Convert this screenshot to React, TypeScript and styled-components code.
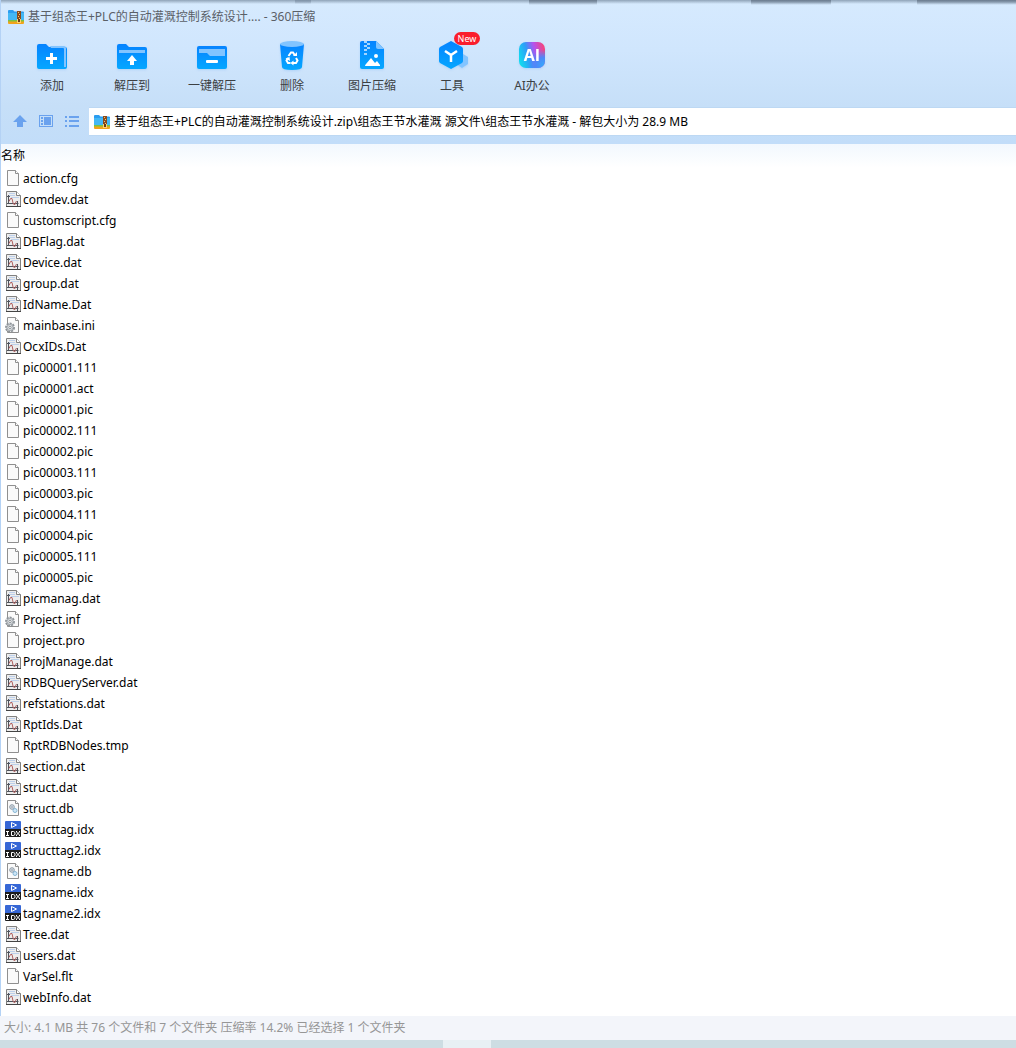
import React from "react";
import styled, { createGlobalStyle } from "styled-components";

const GlobalStyle = createGlobalStyle`
  * { box-sizing: border-box; }
  body {
    margin: 0;
    background: #ffffff;
    font-family: "Noto Sans", "Noto Sans CJK SC", sans-serif;
    font-size: 12px;
    color: #000000;
  }
`;

const Window = styled.div`
  display: flex;
  flex-direction: column;
  min-height: 100vh;
`;

const Frame = styled.main`
  flex: 1;
  display: flex;
  flex-direction: column;
  border-left: 1px solid #b4d2f5;
`;

const Chrome = styled.header`
  background:
    linear-gradient(#8093a8, #8093a800) 294px 0 / 16px 4px no-repeat,
    linear-gradient(#6c7d90, #6c7d9000) 528px 0 / 68px 5px no-repeat,
    linear-gradient(#6c7d90, #6c7d9000) 750px 0 / 80px 5px no-repeat,
    linear-gradient(#6c7d90, #6c7d9000) 916px 0 / 100% 5px no-repeat,
    linear-gradient(#8fa3b8, #b9cde000) 0 0 / 100% 4px no-repeat,
    linear-gradient(#d6eafe, #d0e6fd 50px, #c6dff8 106px, #c2ddf9);
`;

const TitleBar = styled.div`
  display: flex;
  align-items: center;
  gap: 4px;
  height: 32px;
  padding: 2px 0 0 7px;
`;

const Title = styled.h1`
  margin: 0;
  font-size: 12px;
  font-weight: 400;
  line-height: 18px;
  color: #5a6067;
`;

const Toolbar = styled.nav`
  display: flex;
  height: 75px;
  padding: 8px 0 0 11px;
`;

const Tool = styled.button`
  position: relative;
  display: flex;
  flex-direction: column;
  align-items: center;
  gap: 6px;
  width: 80px;
  padding: 0;
  border: 0;
  background: none;
  font: inherit;
  line-height: 16px;
  color: #3c4043;
  white-space: nowrap;

  svg { filter: drop-shadow(0 1px 1px #5aa5f040); }
`;

const Badge = styled.span`
  position: absolute;
  top: -8px;
  left: 42px;
  width: 26px;
  border-radius: 7px;
  background: #fa1e2d;
  color: #ffffff;
  font-size: 9px;
  line-height: 13px;
  text-align: center;
`;

const PathBar = styled.div`
  display: flex;
  align-items: center;
  height: 37px;
  padding-bottom: 8px;
`;

const NavButtons = styled.div`
  display: flex;
  gap: 10px;
  padding: 0 9px 2px 11px;
`;

const NavButton = styled.button`
  display: flex;
  padding: 0;
  border: 0;
  background: none;
`;

const PathBox = styled.label`
  flex: 1;
  display: flex;
  align-items: center;
  gap: 4px;
  height: 29px;
  padding-left: 5px;
  background: #ffffff;
  border-top: 1px solid #bdd8f3;
  border-bottom: 1px solid #bdd8f3;
`;

const PathInput = styled.input`
  flex: 1;
  padding: 0;
  border: 0;
  outline: 0;
  background: none;
  font: inherit;
  line-height: 18px;
  color: #000000;
`;

const Files = styled.section`
  flex: 1;
  padding-bottom: 8px;
  background: linear-gradient(#f2f8fe, #ffffff 24px);
`;

const FileTable = styled.table`
  width: 100%;
  border-collapse: collapse;
`;

const NameHeader = styled.th`
  height: 24px;
  padding: 0;
  font-weight: 400;
  line-height: 16px;
  text-align: left;
`;

const FileCell = styled.td`
  height: 21px;
  padding: 0 0 0 4px;
`;

const FileName = styled.div`
  display: flex;
  align-items: flex-start;
  gap: 2px;
  line-height: 21px;

  svg {
    flex: none;
    margin-top: 2px;
  }
`;

const StatusBar = styled.footer`
  height: 24px;
  padding-left: 4px;
  background: #f3f5fa;
  color: #969696;
  line-height: 24px;
`;

const Taskbar = styled.div`
  height: 8px;
  background: linear-gradient(#e8f0f4, #e8f0f4) 443px 0 / 48px 100% no-repeat #cddde3;
`;

const ArchiveIcon = () => (
  <svg width="16" height="16" viewBox="0 0 16 16" aria-hidden="true">
    <path d="M0 2q0-1 1-1h4l1.500 1.500H15q1 0 1 1V11H0z" fill="#2b9df0" />
    <path d="M0 4h16v7H0z" fill="#43b8f5" />
    <path d="M0 11h16v2H0z" fill="#7cc242" />
    <path d="M0 12.500h16V14q0 1-1 1H1q-1 0-1-1z" fill="#f2a31b" />
    <path d="M9 2h4v12H9z" fill="#8a4a1c" />
    <path d="M10 3h1v1h-1zM11 5h1v1h-1zM10 7h1v1h-1zM11 9h1v1h-1z" fill="#f5c66a" />
    <path d="M9 10h4v4H9z" fill="#ffd36b" />
    <path d="M10 10h2v3h-2z" fill="#6c3b18" />
  </svg>
);

const Gradients = () => (
  <svg width="0" height="0" style={{ position: "absolute" }} aria-hidden="true">
    <defs>
      <linearGradient id="blue" x1="0" y1="0" x2="0" y2="1">
        <stop offset="0" stopColor="#0683ff" />
        <stop offset="1" stopColor="#05a7ff" />
      </linearGradient>
      <linearGradient id="ai" x1="0" y1="0.600" x2="1" y2="0.300">
        <stop offset="0" stopColor="#12d9ee" />
        <stop offset="0.350" stopColor="#2f9cf8" />
        <stop offset="0.650" stopColor="#b453ee" />
        <stop offset="1" stopColor="#f5457c" />
      </linearGradient>
      <radialGradient id="aiCorner" cx="0.950" cy="0.900" r="0.600">
        <stop offset="0" stopColor="#35a8fb" />
        <stop offset="0.500" stopColor="#4d88f8" />
        <stop offset="1" stopColor="#4d88f8" stopOpacity="0" />
      </radialGradient>
    </defs>
  </svg>
);

const AddIcon = () => (
  <svg width="32" height="32" viewBox="0 0 32 32" aria-hidden="true">
    <path d="M1 6q0-2 2-2h7l3 3h16q2 0 2 2v18q0 2-2 2H3q-2 0-2-2z" fill="url(#blue)" />
    <path d="M14 6h14q2 0 2 2v19h-2V9q0-1-1-1H15z" fill="#82c4ff" />
    <path d="M14 13h3v4h4v3h-4v4h-3v-4h-4v-3h4z" fill="#fff" />
  </svg>
);

const ExtractIcon = () => (
  <svg width="32" height="32" viewBox="0 0 32 32" aria-hidden="true">
    <path d="M1 6q0-2 2-2h7l3 3h16q2 0 2 2v18q0 2-2 2H3q-2 0-2-2z" fill="url(#blue)" />
    <path d="M3 10h26v3H3z" fill="#82c4ff" />
    <path d="M16 15l5 6h-3v4h-4v-4h-3z" fill="#fff" />
  </svg>
);

const QuickIcon = () => (
  <svg width="32" height="32" viewBox="0 0 32 32" aria-hidden="true">
    <rect x="1" y="6" width="30" height="23" rx="2" fill="url(#blue)" />
    <path d="M3 9h26v7H14l-3-3H3z" fill="#82c4ff" />
    <rect x="10" y="20" width="12" height="3" rx="1" fill="#fff" />
  </svg>
);

const DeleteIcon = () => (
  <svg width="32" height="32" viewBox="0 0 32 32" aria-hidden="true">
    <path d="M4 4h24l-2 23q0 3-10 3T6 27z" fill="url(#blue)" />
    <ellipse cx="16" cy="4" rx="12" ry="3" fill="#82c4ff" />
    <g fill="none" stroke="#fff" strokeWidth="2">
      <path d="M12.500 16l2.500-3.500h2l2 3" />
      <path d="M20 18l1.500 2.500-1.500 2.500h-3" />
      <path d="M14.500 23H12l-1.500-2.500 1.500-2.500" />
    </g>
    <path d="M17 16h4v-4zM17.500 20.500v5l-3-2.500zM9.500 18.500l4-1.500.5 4z" fill="#fff" />
  </svg>
);

const ImageZipIcon = () => (
  <svg width="32" height="32" viewBox="0 0 32 32" aria-hidden="true">
    <path d="M4 3q0-2 2-2h14l8 8v18q0 2-2 2H6q-2 0-2-2z" fill="url(#blue)" />
    <path d="M20 1l8 8h-6q-2 0-2-2z" fill="#82c4ff" />
    <path d="M8 1h3v2H8zM11 3h3v2h-3zM8 5h3v2H8zM11 7h3v2h-3zM8 9h3v2H8zM8 13h3v2H8z" fill="#a5d5ff" />
    <path d="M9 26q0-1 1-2l5-6 4 5 2-2 3 4v1z" fill="#fff" />
    <circle cx="20" cy="16" r="2" fill="#fff" />
  </svg>
);

const ToolsIcon = () => (
  <svg width="32" height="32" viewBox="0 0 32 32" aria-hidden="true">
    <path d="M27 14l5 3v7l-6 4-6-4z" fill="#82c4ff" />
    <path d="M15 1l11 6q1 1 1 2v12q0 1-1 2l-11 6L4 23q-1-1-1-2V9q0-1 1-2z" fill="url(#blue)" />
    <path d="M9 11l6 4 6-4M15 15v7" fill="none" stroke="#fff" strokeWidth="2.500" />
  </svg>
);

const AiIcon = () => (
  <svg width="32" height="32" viewBox="0 0 32 32" aria-hidden="true">
    <rect x="3" y="2" width="26" height="26" rx="7" fill="url(#ai)" />
    <rect x="3" y="2" width="26" height="26" rx="7" fill="url(#aiCorner)" />
    <text x="16" y="21" textAnchor="middle" fontFamily="Open Sans" fontWeight="700" fontSize="16" fill="#fff">AI</text>
  </svg>
);

const UpIcon = () => (
  <svg width="16" height="16" viewBox="0 0 16 16" aria-hidden="true">
    <path d="M8 2l7 7h-4v5H5V9H1z" fill="#6aa2ee" />
  </svg>
);

const PanelIcon = () => (
  <svg width="16" height="16" viewBox="0 0 16 16" aria-hidden="true" fill="#6aa2ee">
    <path d="M1 2h14v12H1zM2 3v10h12V3z" fillRule="evenodd" />
    <path d="M3 4h2v2H3zM3 7h2v2H3zM3 10h2v2H3zM6 4h7v8H6z" />
  </svg>
);

const ListIcon = () => (
  <svg width="16" height="16" viewBox="0 0 16 16" aria-hidden="true" fill="#6aa2ee">
    <path d="M1 3h2v2H1zM5 3h10v2H5zM1 7h2v2H1zM5 7h10v2H5zM1 12h2v2H1zM5 12h10v2H5z" />
  </svg>
);

const PageIcon = () => (
  <svg width="16" height="16" viewBox="0 0 16 16" aria-hidden="true">
    <path d="M2.500.5h8l3 3v12h-11z" fill="#fafafa" stroke="#8f8f8f" />
    <path d="M10.500.5v3h3" fill="#fff" stroke="#8f8f8f" />
  </svg>
);

const DataIcon = () => (
  <svg width="16" height="16" viewBox="0 0 16 16" aria-hidden="true">
    <path d="M1.500.5h10l4 4v11h-14z" fill="#ededed" stroke="#808080" />
    <path d="M11.500.5v4h4" fill="#fff" stroke="#808080" />
    <path d="M4 2.500h6M4 4.500h6M6 6.500h8" stroke="#bccfea" />
    <path d="M3.500 4v9M2 12.500h11.500M2 5.500h3M12.500 10v5" fill="none" stroke="#50545c" />
    <path d="M4 10.500l1.500-3h1.500l1 4.500 1.500 2 2-4" fill="none" stroke="#b06060" />
    <path d="M1 15.500h15" stroke="#444" />
  </svg>
);

const ConfigIcon = () => (
  <svg width="16" height="16" viewBox="0 0 16 16" aria-hidden="true">
    <path d="M2.500.5h8l3 3v12h-11z" fill="#fafafa" stroke="#8f8f8f" />
    <path d="M10.500.5v3h3" fill="#fff" stroke="#8f8f8f" />
    <circle cx="5" cy="10.500" r="4" fill="#d5d9dc" stroke="#8e9499" strokeWidth="2" strokeDasharray="2 1" />
    <circle cx="5" cy="10.500" r="3" fill="#dfe3e6" stroke="#a3a8ad" />
    <circle cx="5" cy="10.500" r="1.200" fill="#fff" stroke="#8e9499" />
  </svg>
);

const DatabaseIcon = () => (
  <svg width="16" height="16" viewBox="0 0 16 16" aria-hidden="true">
    <path d="M2.500.5h8l3 3v12h-11z" fill="#fafafa" stroke="#8f8f8f" />
    <path d="M10.500.5v3h3" fill="#fff" stroke="#8f8f8f" />
    <circle cx="7" cy="7" r="2.300" fill="#dbe2e8" stroke="#8d99a5" />
    <circle cx="7" cy="7" r="1" fill="#a7b2bc" />
    <circle cx="10" cy="10.500" r="2" fill="#cfe6f5" stroke="#85b6d6" />
  </svg>
);

const IndexIcon = () => (
  <svg width="16" height="16" viewBox="0 0 16 16" aria-hidden="true">
    <path d="M0 1q0-1 1-1h14q1 0 1 1v8H0z" fill="#3667d6" />
    <path d="M6.500 1.500v5l5-2.500z" fill="none" stroke="#fff" />
    <path d="M0 8h16v7q0 1-1 1H1q-1 0-1-1z" fill="#1c1c1c" />
    <g fill="none" stroke="#fff">
      <path d="M1 10.500h3M2.500 10.500v4M1 14.500h3" />
      <path d="M6.500 10.500h2l1.500 1v2l-1.500 1h-2z" />
      <path d="M11.500 10v1l3 3v1M14.500 10v1l-3 3v1" />
    </g>
  </svg>
);

const tools = [
  { label: "添加", Icon: AddIcon },
  { label: "解压到", Icon: ExtractIcon },
  { label: "一键解压", Icon: QuickIcon },
  { label: "删除", Icon: DeleteIcon },
  { label: "图片压缩", Icon: ImageZipIcon },
  { label: "工具", Icon: ToolsIcon, badge: "New" },
  { label: "AI办公", Icon: AiIcon },
];

const icons: Record<string, React.FC> = {
  dat: DataIcon,
  ini: ConfigIcon,
  inf: ConfigIcon,
  db: DatabaseIcon,
  idx: IndexIcon,
};

const files = [
  "action.cfg", "comdev.dat", "customscript.cfg", "DBFlag.dat", "Device.dat",
  "group.dat", "IdName.Dat", "mainbase.ini", "OcxIDs.Dat", "pic00001.111",
  "pic00001.act", "pic00001.pic", "pic00002.111", "pic00002.pic", "pic00003.111",
  "pic00003.pic", "pic00004.111", "pic00004.pic", "pic00005.111", "pic00005.pic",
  "picmanag.dat", "Project.inf", "project.pro", "ProjManage.dat", "RDBQueryServer.dat",
  "refstations.dat", "RptIds.Dat", "RptRDBNodes.tmp", "section.dat", "struct.dat",
  "struct.db", "structtag.idx", "structtag2.idx", "tagname.db", "tagname.idx",
  "tagname2.idx", "Tree.dat", "users.dat", "VarSel.flt", "webInfo.dat",
];

const iconFor = (name: string) =>
  icons[name.slice(name.lastIndexOf(".") + 1).toLowerCase()] ?? PageIcon;

export default function App() {
  return (
    <Window>
      <GlobalStyle />
      <Gradients />
      <Frame>
        <Chrome>
          <TitleBar>
            <ArchiveIcon />
            <Title>基于组态王+PLC的自动灌溉控制系统设计.... - 360压缩</Title>
          </TitleBar>
          <Toolbar>
            {tools.map(({ label, Icon, badge }) => (
              <Tool key={label} type="button">
                <Icon />
                {label}
                {badge && <Badge>{badge}</Badge>}
              </Tool>
            ))}
          </Toolbar>
          <PathBar>
            <NavButtons>
              <NavButton type="button" aria-label="向上"><UpIcon /></NavButton>
              <NavButton type="button" aria-label="预览"><PanelIcon /></NavButton>
              <NavButton type="button" aria-label="列表"><ListIcon /></NavButton>
            </NavButtons>
            <PathBox>
              <ArchiveIcon />
              <PathInput
                aria-label="路径"
                readOnly
                value="基于组态王+PLC的自动灌溉控制系统设计.zip\组态王节水灌溉 源文件\组态王节水灌溉 - 解包大小为 28.9 MB"
              />
            </PathBox>
          </PathBar>
        </Chrome>
        <Files>
          <FileTable>
            <thead>
              <tr><NameHeader scope="col">名称</NameHeader></tr>
            </thead>
            <tbody>
              {files.map((name) => {
                const Icon = iconFor(name);
                return (
                  <tr key={name}>
                    <FileCell><FileName><Icon />{name}</FileName></FileCell>
                  </tr>
                );
              })}
            </tbody>
          </FileTable>
        </Files>
      </Frame>
      <StatusBar>大小: 4.1 MB 共 76 个文件和 7 个文件夹 压缩率 14.2% 已经选择 1 个文件夹</StatusBar>
      <Taskbar />
    </Window>
  );
}
